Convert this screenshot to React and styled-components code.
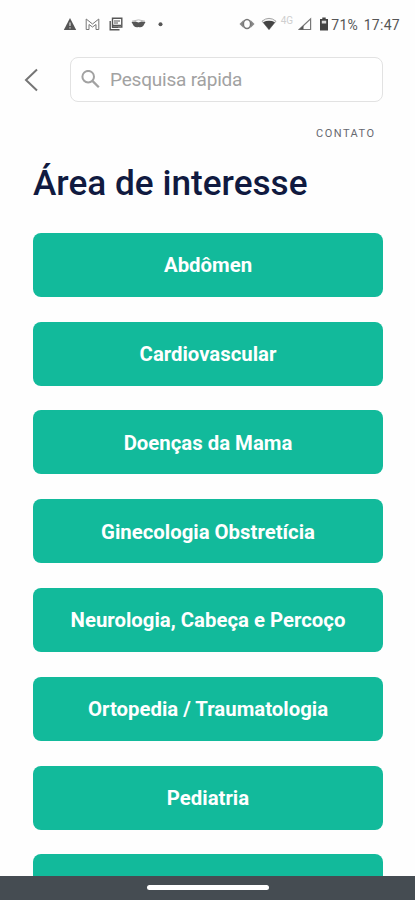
import React from 'react';
import styled, {createGlobalStyle} from 'styled-components';

const GlobalStyle = createGlobalStyle`
  * {
    box-sizing: border-box;
  }

  body {
    margin: 0;
    background: #FEFEFE;
    font-family: Roboto, sans-serif;
  }
`;

const Screen = styled.div`
  display: flex;
  flex-direction: column;
  width: 415px;
  height: 900px;
  overflow: hidden;
`;

const StatusBar = styled.div`
  display: flex;
  flex: none;
  align-items: center;
  justify-content: space-between;
  height: 48px;
  padding: 0 15px 0 63px;
  color: #565656;
`;

const StatusGroup = styled.div`
  display: flex;
  align-items: center;
  gap: ${props => props.$gap}px;

  svg {
    display: block;
  }
`;

const Network = styled.span`
  width: 14px;
  margin: -6px -3px 0 -3px;
  font-size: 10px;
  line-height: 10px;
  color: #CFCFCF;
`;

const StatusText = styled.span`
  font-size: 14px;
  line-height: 16px;
  letter-spacing: 0.3px;
  margin-top: 1px;
  margin-left: ${props => props.$left || 0}px;
`;

const SearchRow = styled.div`
  display: flex;
  flex: none;
  align-items: center;
  height: 45px;
  margin-top: 9px;
  padding: 0 32px 0 23px;
`;

const BackButton = styled.button`
  display: flex;
  width: 47px;
  padding: 0;
  border: 0;
  background: none;
  color: #757575;
`;

const SearchBox = styled.label`
  display: flex;
  flex: 1;
  align-items: center;
  height: 45px;
  padding-left: 10px;
  border: 1.5px solid #E2E2E2;
  border-radius: 8px;
  background: #FFF;
  color: #A2A2A2;
`;

const SearchInput = styled.input`
  flex: 1;
  min-width: 0;
  padding: 0;
  margin-left: 9px;
  border: 0;
  outline: 0;
  background: none;
  font-family: inherit;
  font-size: 19px;
  letter-spacing: -0.2px;

  &::placeholder {
    color: #A2A2A2;
  }
`;

const ContactLink = styled.div`
  flex: none;
  margin: 25px 39.5px 0 0;
  font-size: 11px;
  line-height: 13px;
  letter-spacing: 1.5px;
  text-align: right;
  color: #666870;
`;

const Title = styled.h1`
  flex: none;
  margin: 22px 33px 28.8px;
  font-size: 35.2px;
  line-height: 42px;
  font-weight: 500;
  color: #101A40;
`;

const AreaList = styled.div`
  display: flex;
  flex: 1;
  flex-direction: column;
  gap: 24.8px;
  min-height: 0;
  padding: 0 32px 0 33px;
  overflow: hidden;
`;

const AreaButton = styled.button`
  flex: none;
  height: 64px;
  padding: 1px 0 0;
  border: 0;
  border-radius: 8px;
  background: #12BA9B;
  font-family: inherit;
  font-size: 20.35px;
  font-weight: 700;
  color: #FFF;
`;

const NavigationBar = styled.div`
  display: flex;
  flex: none;
  justify-content: center;
  height: 24px;
  padding-top: 9px;
  background: #454C52;
`;

const HomeHandle = styled.div`
  width: 122px;
  height: 5px;
  border-radius: 3px;
  background: #FFF;
`;

const WarningIcon = () => (
  <svg width="14" height="14" viewBox="0 0 14 14">
    <path d="M7 1 L13.2 13 H.8 Z" fill="currentColor" />
    <path d="M7 5.5 V9 M7 10.3 V11.6" stroke="#DDD" strokeWidth="1.2" />
  </svg>
);

const MailIcon = () => (
  <svg width="15" height="14" viewBox="0 0 15 14" fill="none" stroke="#777">
    <path d="M4 12.5 H1.2 V2 L7.5 7 L13.8 2 V12.5 H11 V7.5 L7.5 10 L4 7.5 Z" strokeWidth="1" />
  </svg>
);

const NewsIcon = () => (
  <svg width="14" height="14" viewBox="0 0 14 14" fill="none" stroke="currentColor">
    <path d="M3.5 1.2 H12.8 V10 H3.5 Z M1.2 4 V12.8 H10.5" strokeWidth="1.4" />
    <path d="M5 4 H11 M5 6 H9 M3 8.3 H12 M3 10.5 H9" strokeWidth="1.2" />
  </svg>
);

const MaskIcon = () => (
  <svg width="15" height="14" viewBox="0 0 15 14">
    <path d="M1 4.2 Q7.5 1.5 14 4.2" fill="none" stroke="#BBB" />
    <path d="M.5 5 L4.5 4.5 L7.5 5.5 L10.5 4.5 L14.5 5 L12.2 9 Q10 11 7.5 10 Q5 11 2.8 9 Z" fill="currentColor" />
  </svg>
);

const DotIcon = () => (
  <svg width="9" height="14" viewBox="0 0 9 14">
    <circle cx="5.5" cy="7.3" r="2" fill="currentColor" />
  </svg>
);

const VibrateIcon = () => (
  <svg width="16" height="14" viewBox="0 0 16 14">
    <path d="M4.5 3 L.5 7 L4.5 11 Z M11.5 3 L15.5 7 L11.5 11 Z" fill="#888" />
    <ellipse cx="8" cy="7" rx="3.6" ry="4.5" fill="#FEFEFE" stroke="#777" strokeWidth="1.5" />
  </svg>
);

const WifiIcon = () => (
  <svg width="16" height="14" viewBox="0 0 16 14">
    <path d="M1 4.2 Q8 -1.5 15 4.2 L8 12.7 Z" fill="#F5F5F5" stroke="#999" strokeWidth=".9" />
    <path d="M2 5.2 Q8 2.3 14 5.2 L8 12.8 Z" fill="#444" />
  </svg>
);

const SignalIcon = () => (
  <svg width="14" height="14" viewBox="0 0 14 14">
    <path d="M1.2 12.5 L12.6 1.8 V12.5 Z" fill="none" stroke="#777" strokeWidth="1.2" />
    <path d="M1.2 12.5 L5.5 8.5 V12.5 Z" fill="currentColor" />
  </svg>
);

const BatteryIcon = () => (
  <svg width="10" height="14" viewBox="0 0 10 14">
    <path d="M3.3 .5 H6.7 V2 H9 V13.4 H1 V2 H3.3 Z" fill="#444" />
    <path d="M2.8 3.7 H7.2 V6.5 H2.8 Z" fill="#DDD" />
  </svg>
);

const BackIcon = () => (
  <svg width="16" height="24" viewBox="0 0 16 24" fill="none" stroke="currentColor" strokeWidth="2">
    <path d="M14 1.5 L3 12 L14 22.5" />
  </svg>
);

const SearchIcon = () => (
  <svg width="20" height="20" viewBox="0 0 20 20" fill="none" stroke="currentColor" strokeWidth="2">
    <circle cx="7.2" cy="6.7" r="5.8" />
    <path d="M11.4 10.9 L17.8 17.3" strokeWidth="2.3" />
  </svg>
);

const areas = [
  'Abdômen',
  'Cardiovascular',
  'Doenças da Mama',
  'Ginecologia Obstretícia',
  'Neurologia, Cabeça e Percoço',
  'Ortopedia / Traumatologia',
  'Pediatria',
  '',
];

const App = () => (
  <Screen>
    <GlobalStyle />
    <StatusBar>
      <StatusGroup $gap={8.4}>
        <WarningIcon />
        <MailIcon />
        <NewsIcon />
        <MaskIcon />
        <DotIcon />
      </StatusGroup>
      <StatusGroup $gap={6.5}>
        <VibrateIcon />
        <WifiIcon />
        <Network>4G</Network>
        <SignalIcon />
        <BatteryIcon />
        <StatusText $left={-4}>71%</StatusText>
        <StatusText $left={-1}>17:47</StatusText>
      </StatusGroup>
    </StatusBar>

    <SearchRow>
      <BackButton aria-label="Voltar">
        <BackIcon />
      </BackButton>
      <SearchBox>
        <SearchIcon />
        <SearchInput placeholder="Pesquisa rápida" />
      </SearchBox>
    </SearchRow>

    <ContactLink>CONTATO</ContactLink>
    <Title>Área de interesse</Title>

    <AreaList>
      {areas.map((area, index) => (
        <AreaButton key={index}>{area}</AreaButton>
      ))}
    </AreaList>

    <NavigationBar>
      <HomeHandle />
    </NavigationBar>
  </Screen>
);

export default App;
